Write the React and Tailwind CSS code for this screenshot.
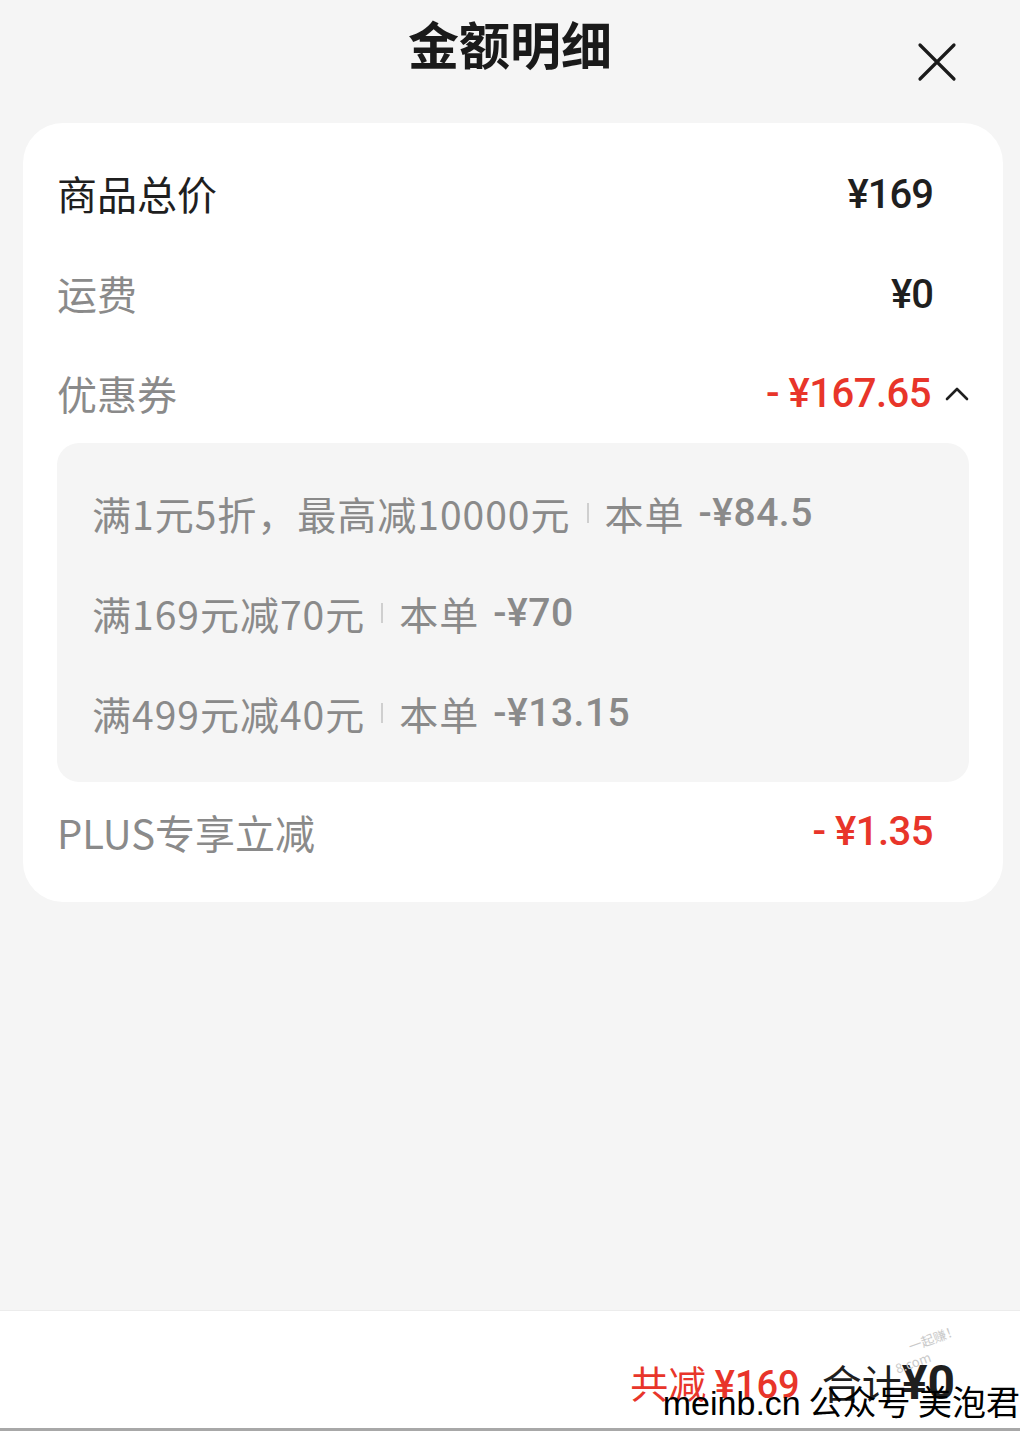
import React from 'react';

const CJK = { fontFamily: '"Noto Sans CJK SC", "Noto Sans", sans-serif' };
const NUM = { fontFamily: 'Roboto, "Noto Sans CJK SC", sans-serif' };

const coupons = [
  { rule: '满1元5折，最高减10000元', off: '-¥84.5' },
  { rule: '满169元减70元', off: '-¥70' },
  { rule: '满499元减40元', off: '-¥13.15' }
];

function Row({ label, dark, children }) {
  return (
    <div className="h-[100px] flex items-center justify-between">
      <span className={`text-[40px] ${dark ? 'text-[#1f1f1f]' : 'text-[#8a8a8a]'}`}>{label}</span>
      {children}
    </div>
  );
}

export default function App() {
  return (
    <div className="relative h-[1431px] w-[1020px] bg-[#f5f5f5] flex flex-col overflow-hidden" style={CJK}>
      {/* header */}
      <div className="h-[123px] grid grid-cols-[1fr_auto_1fr] items-start">
        <div />
        <h1 className="pt-[8px] text-[51px] font-bold text-[#1a1a1a] leading-[70px]">金额明细</h1>
        <div className="flex justify-end pr-[63px] pt-[42px]">
          <svg width="40" height="40" viewBox="0 0 40 40" fill="none" stroke="#1a1a1a" strokeWidth="3.2" strokeLinecap="round">
            <path d="M3 3L37 37M37 3L3 37" />
          </svg>
        </div>
      </div>

      {/* card */}
      <div className="ml-[23px] mr-[17px] bg-white rounded-[40px] px-[34px] pt-[20px] pb-[20px]">
        <Row label="商品总价" dark>
          <span className="pr-[36px] pt-[4px] text-[40px] font-medium text-[#1f1f1f] tracking-[-1px]" style={NUM}>¥169</span>
        </Row>
        <Row label="运费">
          <span className="pr-[36px] pt-[4px] text-[40px] font-medium text-[#1f1f1f] tracking-[-1px]" style={NUM}>¥0</span>
        </Row>
        <Row label="优惠券">
          <div className="flex items-center pt-[2px]">
            <span className="text-[40px] font-medium text-[#e8352a] tracking-[-0.5px]" style={NUM}>- ¥167.65</span>
            <svg className="ml-[14px]" width="24" height="16" viewBox="0 0 24 16" fill="none" stroke="#1f1f1f" strokeWidth="2.6" strokeLinecap="round" strokeLinejoin="round">
              <path d="M2 13L12 3L22 13" />
            </svg>
          </div>
        </Row>

        <div className="bg-[#f5f5f5] rounded-[22px] px-[35px] pt-[20px] pb-[19px]">
          {coupons.map((c) => (
            <div key={c.rule} className="h-[100px] flex items-center text-[39px] tracking-[1px] text-[#8a8a8a]">
              <span>{c.rule}</span>
              <span className="mx-[16px] w-[2px] h-[20px] bg-[#cfcfcf]" />
              <span>本单</span>
              <span className="ml-[14px] font-medium tracking-[0.5px]" style={NUM}>{c.off}</span>
            </div>
          ))}
        </div>

        <Row label="PLUS专享立减">
          <span className="pr-[36px] text-[40px] font-medium text-[#e8352a] tracking-[-0.5px]" style={NUM}>- ¥1.35</span>
        </Row>
      </div>

      <div className="flex-1" />

      {/* bottom bar */}
      <div className="h-[118px] bg-white border-t border-[#ececec] flex justify-end items-start pt-[46px] pr-[65px]">
        <span className="text-[38px] text-[#e8352a] leading-[50px]">
          共减 <span className="font-medium" style={NUM}>¥169</span>
        </span>
        <span className="ml-[22px] text-[40px] text-[#1f1f1f] leading-[50px]">
          合计<span className="text-[48px] font-bold" style={NUM}>¥0</span>
        </span>
      </div>
      <div className="h-[3px] bg-[#a8a8a8]" />

      {/* watermarks */}
      <div className="absolute left-[852px] top-[1340px] -rotate-[20deg] text-[13px] leading-[16px] text-[#c9c9c9]">
        <div className="pl-[60px]">一起赚！</div>
        <div className="pl-[40px]">8.com</div>
      </div>
      <div className="absolute right-0 top-[1378px] text-[34px] leading-[46px] text-black whitespace-nowrap">
        <span style={{ fontFamily: '"Liberation Sans", sans-serif' }}>meinb.cn</span> 公众号 美泡君
      </div>
    </div>
  );
}
